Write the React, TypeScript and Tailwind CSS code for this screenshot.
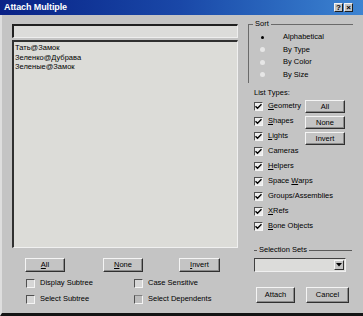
import React from "react";

const FONT = "font-['Liberation_Sans',Arial,sans-serif]";

const sortItems = [
  { label: "Alphabetical", on: true },
  { label: "By Type", on: false },
  { label: "By Color", on: false },
  { label: "By Size", on: false },
];

// [text, index of mnemonic letter or -1]
const listTypes: [string, number][] = [
  ["Geometry", 0],
  ["Shapes", 0],
  ["Lights", 0],
  ["Cameras", -1],
  ["Helpers", 0],
  ["Space Warps", 6],
  ["Groups/Assemblies", -1],
  ["XRefs", 0],
  ["Bone Objects", 0],
];

const objects = ["Тать@Замок", "Зеленко@Дубрава", "Зеленые@Замок"];

export default function App() {
  return (
    <div className={`w-[363px] h-[316px] overflow-hidden flex flex-col bg-[#c4c4c4] text-black ${FONT}`}>
      {/* Title bar */}
      <div className="h-[15px] shrink-0 flex items-center bg-linear-to-r from-[#0a2186] via-[#1a48a8] to-[#3d84d2] pl-[4px] pr-[10px]">
        <span className="text-[9px] font-bold text-white leading-none tracking-[-0.1px]">Attach Multiple</span>
        <div className="ml-auto flex gap-[1px]">
          <TitleBtn glyph="?" />
          <TitleBtn glyph="×" />
        </div>
      </div>

      {/* Body */}
      <div className="flex-1 flex border-l-2 border-[#dedede] border-b-[3px] border-b-[#141414] text-[7.5px] leading-[8px]">
        {/* Left column */}
        <div className="w-[236px] pl-[10px] pt-[9px] flex flex-col">
          <div className="h-[14px] w-full bg-[#dcdcda] border-t-2 border-l-2 border-t-[#202020] border-l-[#202020] border-b border-r border-b-[#eeeeee] border-r-[#eeeeee]" />
          <div className="mt-[2px] h-[208px] w-full bg-[#dcdcd8] border-t-2 border-l-2 border-t-[#303030] border-l-[#303030] border-b border-r border-b-[#f0f0f0] border-r-[#f0f0f0] pt-[1px] pl-[1px] leading-[9.5px]">
            {objects.map((o) => (
              <div key={o} className="whitespace-nowrap">{o}</div>
            ))}
          </div>

          <div className="mt-[10px] flex h-[14px]">
            <Btn className="ml-[13px] w-[40px] h-[14px]"><u>A</u>ll</Btn>
            <Btn className="ml-[38px] w-[40px] h-[14px]"><u>N</u>one</Btn>
            <Btn className="ml-[36px] w-[41px] h-[14px]"><u>I</u>nvert</Btn>
          </div>

          <div className="mt-[3px] grid grid-cols-[108px_1fr] pl-[14px]">
            <CheckRow label="Display Subtree" disabled h="h-[16px]" />
            <CheckRow label="Case Sensitive" disabled h="h-[16px]" />
            <CheckRow label="Select Subtree" disabled h="h-[16px]" />
            <CheckRow label="Select Dependents" disabled dim h="h-[16px]" />
          </div>
        </div>

        {/* Right column */}
        <div className="ml-[10px] w-[105px] pt-[5px] flex flex-col">
          <fieldset className="border-t border-l border-[#6a6a6a] pb-[2px]">
            <legend className="ml-[4px] px-[2px] leading-[8px]">Sort</legend>
            <div className="pt-[3px]">
              {sortItems.map((s) => (
                <div key={s.label} className="h-[12.5px] flex items-center">
                  <div className="w-[24px] flex justify-center pl-[2px]">
                    {s.on ? (
                      <span className="w-[3px] h-[3px] rounded-full bg-black" />
                    ) : (
                      <span className="w-[5px] h-[5px] rounded-full bg-[#e6e6e6]" />
                    )}
                  </div>
                  <span className="ml-[10px] whitespace-nowrap">{s.label}</span>
                </div>
              ))}
            </div>
          </fieldset>

          <div className="pl-[6px]">
            <div className="mt-[6px] h-[8px]">List Types:</div>
            <div className="mt-[1.5px] flex">
              <div className="flex-1 min-w-0">
                {listTypes.map(([t, m]) => (
                  <CheckRow key={t} label={t} mnemonic={m} checked h="h-[15px]" />
                ))}
              </div>
              <div className="shrink-0 pr-[8px] mt-[1.5px] flex flex-col gap-[3px]">
                <Btn className="w-[40px] h-[13px]">All</Btn>
                <Btn className="w-[40px] h-[13px]">None</Btn>
                <Btn className="w-[40px] h-[13px]">Invert</Btn>
              </div>
            </div>

            <div className="mt-[12.5px] h-[8px] flex items-center">
              <span className="w-[3px] h-px bg-[#5a5a5a]" />
              <span className="mx-[2px] whitespace-nowrap">Selection Sets</span>
              <span className="flex-1 h-px bg-[#5a5a5a] mr-[1px]" />
            </div>

            <div className="mt-[4px] w-[92px] h-[14px] flex bg-[#dcdcda] border-t border-l border-t-[#404040] border-l-[#404040] border-b border-r border-b-[#f0f0f0] border-r-[#f0f0f0] p-[1px]">
              <div className="ml-auto w-[10px] h-full flex items-center justify-center bg-[#c4c4c4] border border-t-[#f4f4f4] border-l-[#f4f4f4] border-b-[#303030] border-r-[#303030]">
                <svg width="6" height="4" viewBox="0 0 6 4">
                  <path d="M0 0H6L3 3.5Z" fill="#000" />
                </svg>
              </div>
            </div>

            <div className="mt-[15px] flex">
              <Btn className="ml-[2px] w-[39px] h-[16px]">Attach</Btn>
              <Btn className="ml-[11px] w-[43px] h-[16px]">Cancel</Btn>
            </div>
          </div>
        </div>
      </div>
    </div>
  );
}

function TitleBtn({ glyph }: { glyph: string }) {
  return (
    <div className="w-[9px] h-[9px] flex items-center justify-center bg-[#c4c4c4] border-t border-l border-t-[#f4f4f4] border-l-[#f4f4f4] border-b border-r border-b-[#202020] border-r-[#202020] text-[8px] font-bold leading-none text-black">
      {glyph}
    </div>
  );
}

function Btn({ children, className }: { children: React.ReactNode; className?: string }) {
  return (
    <div
      className={`flex items-center justify-center bg-[#c4c4c4] border-t border-l border-t-[#f4f4f4] border-l-[#f4f4f4] border-b border-r border-b-[#303030] border-r-[#303030] shadow-[inset_-1px_-1px_#8a8a8a] whitespace-nowrap ${className ?? ""}`}
    >
      {children}
    </div>
  );
}

function CheckRow({
  label,
  mnemonic = -1,
  checked,
  disabled,
  dim,
  h,
}: {
  label: string;
  mnemonic?: number;
  checked?: boolean;
  disabled?: boolean;
  dim?: boolean;
  h: string;
}) {
  return (
    <div className={`${h} flex items-center whitespace-nowrap`}>
      <div
        className={`w-[9px] h-[9px] shrink-0 flex items-center justify-center border-t border-l border-t-[#505050] border-l-[#505050] border-b border-r border-b-[#f4f4f4] border-r-[#f4f4f4] ${
          disabled ? (dim ? "bg-[#bcbcbc] border-t-[#808080]" : "bg-[#d6d6d6]") : "bg-[#ececec]"
        }`}
      >
        {checked && (
          <svg width="7" height="7" viewBox="0 0 7 7">
            <path d="M0.5 3.2L2.5 5.2L6.5 1.2" stroke="#000" strokeWidth="1.4" fill="none" />
          </svg>
        )}
      </div>
      <span className="ml-[5px]">
        {mnemonic >= 0 ? (
          <>
            {label.slice(0, mnemonic)}
            <u>{label[mnemonic]}</u>
            {label.slice(mnemonic + 1)}
          </>
        ) : (
          label
        )}
      </span>
    </div>
  );
}
